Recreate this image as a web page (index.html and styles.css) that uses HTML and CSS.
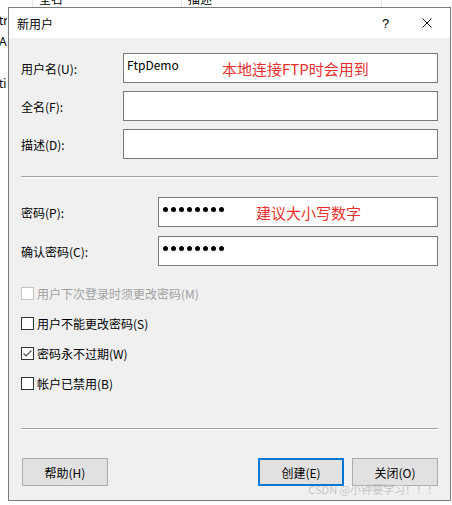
FILE: index.html
```html
<!DOCTYPE html>
<html lang="zh-CN">
<head>
  <meta charset="UTF-8">
  <title>新用户</title>
  <link rel="stylesheet" href="styles.css">
</head>
<body>
  <div class="desktop">
    <!-- list window behind the dialog -->
    <div class="behind">
      <div class="behind-head">
        <span class="col c1"></span>
        <span class="col c2">全名</span>
        <span class="col c3">描述</span>
        <span class="col c4"></span>
      </div>
      <div class="behind-side">
        <span class="s1">tr</span>
        <span class="s2">Ac</span>
        <span class="s3">ti</span>
      </div>
    </div>

    <div class="dialog">
      <div class="titlebar">
        <span class="title">新用户</span>
        <span class="help">?</span>
        <span class="close">
          <svg width="10" height="10" viewBox="0 0 10 10"><path d="M0.5 0.5 L9.5 9.5 M9.5 0.5 L0.5 9.5" stroke="#111" stroke-width="1" fill="none"/></svg>
        </span>
      </div>

      <div class="client">
        <div class="group names">
          <div class="row">
            <label>用户名(U):</label>
            <div class="field"><span class="value">FtpDemo</span><span class="note">本地连接FTP时会用到</span></div>
          </div>
          <div class="row">
            <label>全名(F):</label>
            <div class="field"></div>
          </div>
          <div class="row">
            <label>描述(D):</label>
            <div class="field"></div>
          </div>
        </div>

        <div class="sep sep-top"></div>

        <div class="group passwords">
          <div class="row">
            <label>密码(P):</label>
            <div class="field secret">
              <span class="dots"><i></i><i></i><i></i><i></i><i></i><i></i><i></i><i></i></span>
              <span class="note">建议大小写数字</span>
            </div>
          </div>
          <div class="row">
            <label>确认密码(C):</label>
            <div class="field secret">
              <span class="dots"><i></i><i></i><i></i><i></i><i></i><i></i><i></i><i></i></span>
            </div>
          </div>
        </div>

        <div class="checks">
          <div class="check disabled"><span class="box"></span>用户下次登录时须更改密码(M)</div>
          <div class="check"><span class="box"></span>用户不能更改密码(S)</div>
          <div class="check"><span class="box"><svg width="11" height="11" viewBox="0 0 11 11"><path d="M1.5 5.5 L4 8 L9.5 2.5" stroke="#555" stroke-width="1.2" fill="none"/></svg></span>密码永不过期(W)</div>
          <div class="check"><span class="box"></span>帐户已禁用(B)</div>
        </div>

        <div class="sep sep-bottom"></div>

        <div class="buttons">
          <button class="btn">帮助(H)</button>
          <span class="spacer"></span>
          <button class="btn default">创建(E)</button>
          <button class="btn">关闭(O)</button>
        </div>
      </div>

      <div class="watermark">CSDN @小钟要学习！！！</div>
    </div>
  </div>
</body>
</html>
```

FILE: styles.css
```css
body {
  margin: 0;
  padding: 0;
  background: #fff;
  font-family: "Noto Sans CJK SC", "Noto Sans", sans-serif;
  font-size: 12px;
  color: #000;
  overflow: hidden;
}
.desktop {
  position: relative;
  width: 452px;
  height: 505px;
}

/* window in the background */
.behind {
  position: absolute;
  left: 0;
  top: 0;
  width: 452px;
  height: 505px;
}
.behind-head {
  display: flex;
  height: 18px;
  margin-top: -10px;
  line-height: 18px;
}
.behind-head .col {
  border-right: 1px solid #e5e5e5;
  padding-left: 6px;
  box-sizing: border-box;
}
.c1 { width: 33px; }
.c2 { width: 149px; }
.c3 { width: 200px; }
.c4 { flex: 1; border-right: none !important; }
.behind-side {
  display: flex;
  flex-direction: column;
  width: 8px;
  overflow: hidden;
  font-family: "Noto Sans", sans-serif;
  line-height: 18px;
  margin-left: -1px;
}
.behind-side .s1 { margin-top: 4px; }
.behind-side .s2 { margin-top: 3px; }
.behind-side .s3 { margin-top: 24px; }

/* dialog */
.dialog {
  position: absolute;
  left: 8px;
  top: 7px;
  width: 443px;
  height: 494px;
  box-sizing: border-box;
  border: 1px solid #7a7a7a;
  background: #f0f0f0;
  display: flex;
  flex-direction: column;
}
.titlebar {
  height: 30px;
  background: #fff;
  display: flex;
  align-items: center;
}
.title {
  flex: 1;
  padding-left: 8px;
  font-size: 12px;
}
.help {
  width: 37px;
  text-align: center;
  font-family: "Liberation Sans", sans-serif;
  font-size: 13px;
}
.close {
  width: 46px;
  height: 30px;
  display: flex;
  align-items: center;
  justify-content: center;
}
.client {
  flex: 1;
  padding: 15px 12px 0;
  display: flex;
  flex-direction: column;
}
.group {
  display: flex;
  flex-direction: column;
}
.names { gap: 8px; }
.passwords { gap: 9px; margin-top: 19px; }
.row {
  display: flex;
  align-items: center;
  height: 30px;
}
.names label { width: 102px; }
.passwords label { width: 137px; }
.field {
  position: relative;
  flex: 1;
  height: 30px;
  box-sizing: border-box;
  border: 1px solid #7a7a7a;
  background: #fff;
  padding: 2px 3px 0;
  line-height: 17px;
}
.note {
  position: absolute;
  top: 5px;
  left: 98px;
  font-size: 15px;
  line-height: 20px;
  color: #e8312f;
  white-space: nowrap;
}
.secret .note { left: 97px; }
.dots {
  display: flex;
  gap: 3px;
  padding: 7px 0 0 1px;
}
.dots i {
  display: block;
  width: 5px;
  height: 5px;
  border-radius: 50%;
  background: #000;
}
.sep {
  height: 0;
  border-top: 1px solid #a0a0a0;
  border-bottom: 1px solid #fff;
}
.sep-top { margin-top: 17px; }
.sep-bottom { margin-top: 35px; }

.checks {
  display: flex;
  flex-direction: column;
  gap: 10px;
  margin-top: 17px;
}
.check {
  display: flex;
  align-items: center;
  height: 20px;
  gap: 3px;
}
.check .box {
  width: 13px;
  height: 13px;
  box-sizing: border-box;
  border: 1px solid #333;
  background: #fff;
  display: flex;
  align-items: center;
  justify-content: center;
}
.check.disabled { color: #a0a0a0; }
.check.disabled .box { border-color: #c4c4c4; }

.buttons {
  display: flex;
  gap: 8px;
  margin-top: 28px;
  padding-left: 1px;
}
.spacer { flex: 1; }
.btn {
  width: 86px;
  height: 28px;
  box-sizing: border-box;
  border: 1px solid #adadad;
  background: #e1e1e1;
  font-family: inherit;
  font-size: 12px;
  color: #000;
  padding: 0;
}
.btn.default {
  border: 2px solid #0078d7;
}
.watermark {
  position: absolute;
  right: 12px;
  bottom: 3px;
  font-size: 11px;
  color: #c6c6c6;
  white-space: nowrap;
}
```
